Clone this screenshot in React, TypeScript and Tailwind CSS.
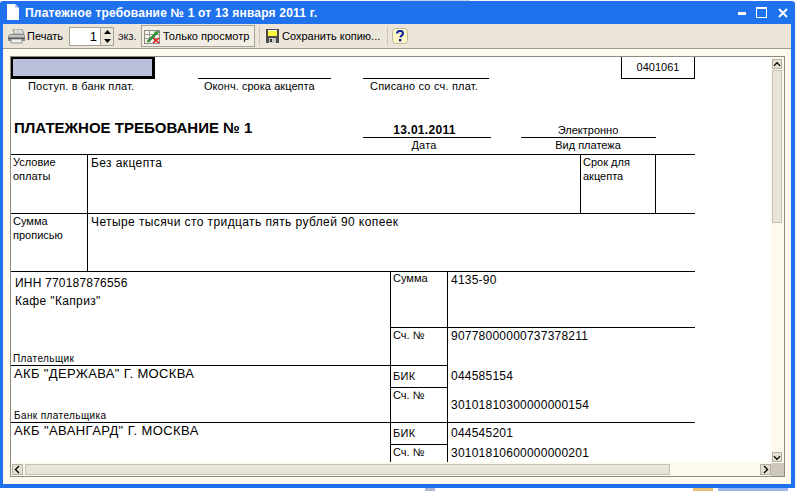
const arial = "font-['Liberation_Sans',Arial,sans-serif]";

function DocIcon() {
  return (
    <svg width="14" height="17" viewBox="0 0 14 17" className="ml-[6px] shrink-0">
      <path d="M1 0h8l4 4v12H1z" fill="#ffffff" />
      <path d="M9 0v4h4" fill="#b9cdf0" />
    </svg>
  );
}

function PrinterIcon() {
  return (
    <svg width="17" height="15" viewBox="0 0 17 15" className="shrink-0">
      <path d="M5 0h9l2 5H6z" fill="#dcdcdc" stroke="#7d7d7d" strokeWidth="0.7" />
      <path d="M2 5h14l1 2v5H0V7z" fill="#8a8a8a" />
      <rect x="1" y="6" width="15" height="2" fill="#c4c4c4" />
      <rect x="3" y="10" width="11" height="4" fill="#eeeeee" stroke="#6a6a6a" strokeWidth="0.6" />
      <rect x="0" y="9" width="17" height="1" fill="#5f5f5f" />
    </svg>
  );
}

function ViewOnlyIcon() {
  return (
    <svg width="17" height="15" viewBox="0 0 17 15" className="shrink-0">
      <rect x="0.5" y="1.5" width="15" height="13" fill="#f5f5ee" stroke="#8a8a80" />
      <path d="M0 5.5h16M0 9.5h16M5.5 1v14M10.5 1v14" stroke="#9a9a90" strokeWidth="1" />
      <path d="M4 11 13 2l2 1-9 9-3 1z" fill="#2f9e3a" stroke="#1c6e25" strokeWidth="0.6" />
      <path d="M9 9l6 5M15 9l-6 5" stroke="#e01818" strokeWidth="1.6" />
    </svg>
  );
}

function FloppyIcon() {
  return (
    <svg width="13" height="14" viewBox="0 0 13 14" className="shrink-0">
      <rect width="13" height="14" fill="#4b4b4b" />
      <rect x="2" y="1" width="9" height="6" fill="#fff23a" />
      <rect x="2" y="1" width="9" height="1" fill="#ffffff" />
      <rect x="3" y="9" width="7" height="5" fill="#c9c9c9" />
      <rect x="4" y="10" width="2" height="3" fill="#333333" />
    </svg>
  );
}

function HelpIcon() {
  return (
    <svg width="16" height="16" viewBox="0 0 16 16" className="shrink-0">
      <rect x="0.5" y="0.5" width="15" height="15" rx="3" fill="#fdf8c4" stroke="#b9b6a4" />
      <path d="M5 5.5C5 3.6 6.3 3 8 3s3 .8 3 2.4c0 2-2.6 2-2.6 4.2" fill="none" stroke="#0c1c9c" strokeWidth="2" />
      <rect x="7" y="11" width="2.4" height="2.4" fill="#0c1c9c" />
    </svg>
  );
}

function Chevron({ d }: { d: string }) {
  return (
    <svg width="9" height="9" viewBox="0 0 9 9">
      <path d={d} fill="none" stroke="#000000" strokeWidth="1.4" />
    </svg>
  );
}

function ScrollButton({ d, className }: { d: string; className: string }) {
  return (
    <div className={`flex items-center justify-center bg-[#e4dfd2] border border-[#f8f6ee] outline outline-[#b5b0a2] -outline-offset-1 ${className}`}>
      <Chevron d={d} />
    </div>
  );
}

function Cell({ className = "", children }: { className?: string; children?: React.ReactNode }) {
  return <div className={`border-black ${className}`}>{children}</div>;
}

export default function App() {
  return (
    <div className={`w-[796px] h-[491px] overflow-hidden bg-white text-black ${arial}`}>
      {/* desktop behind the window, top edge */}
      <div className="h-px flex">
        <div className="w-[400px]" />
        <div className="w-[70px] bg-[#c9cfe6]" />
      </div>
      <div className="flex">
        <div className="w-[795px] h-[487px] flex flex-col bg-[#1f72ec] px-[3px] pb-[4px] rounded-t-[3px] pr-[4px]">
          {/* title bar */}
          <div className="h-[23px] shrink-0 flex items-center -ml-[3px] -mr-[4px]">
            <DocIcon />
            <span className="ml-[5px] text-[12px] font-bold text-white tracking-[0.2px] leading-none">
              Платежное требование № 1 от 13 января 2011 г.
            </span>
            <div className="ml-auto flex items-center">
              <div className="w-[8px] h-[3px] bg-white self-end mb-[3px]" />
              <div className="ml-[10px] w-[11px] h-[11px] border border-t-2 border-white" />
              <svg width="10" height="10" viewBox="0 0 10 10" className="ml-[11px] mr-[7px]">
                <path d="M1 1l8 8M9 1l-8 8" stroke="#ffffff" strokeWidth="2" />
              </svg>
            </div>
          </div>

          {/* toolbar */}
          <div className="h-[25px] shrink-0 flex items-center bg-[#ebe5da] border-b border-[#a19d92] text-[11px] pl-[5px]">
            <PrinterIcon />
            <span className="ml-[2px] w-[42px]">Печать</span>
            <div className="flex h-[19px] w-[45px] border border-[#a5a193] bg-white">
              <div className="w-[30px] text-right pr-[3px] text-[13px] leading-[17px]">1</div>
              <div className="flex-1 flex flex-col items-center justify-between py-[2px] bg-[#ece8dc] border-l border-[#a5a193]">
                <svg width="7" height="4" viewBox="0 0 7 4"><path d="M3.5 0 7 4H0z" fill="#000000" /></svg>
                <svg width="7" height="4" viewBox="0 0 7 4"><path d="M3.5 4 7 0H0z" fill="#000000" /></svg>
              </div>
            </div>
            <span className="ml-[4px] w-[23px] text-[#222222]">экз.</span>
            <div className="h-[22px] w-[114px] flex items-center border border-[#a5a193] bg-[#f2eee6] pl-[2px]">
              <ViewOnlyIcon />
              <span className="ml-[2px] whitespace-nowrap">Только просмотр</span>
            </div>
            <div className="ml-[4px] w-px h-[18px] bg-[#c9c4b7]" />
            <div className="ml-[6px]"><FloppyIcon /></div>
            <span className="ml-[3px] whitespace-nowrap w-[105px]">Сохранить копию...</span>
            <div className="w-px h-[18px] bg-[#c9c4b7]" />
            <div className="ml-[4px]"><HelpIcon /></div>
          </div>

          {/* client area */}
          <div className="flex-1 min-h-0 bg-[#fdf9ee] pt-[7px] px-[7px] pb-[7px] pr-[6px]">
            <div className="h-[421px] border border-[#8f8b80] flex flex-col bg-[#fdf9ee]">
              <div className="h-[406px] flex">
                {/* document */}
                <div className="w-[760px] h-[405px] overflow-hidden bg-white">
                  <div className="flex h-[22px]">
                    <div className="w-[144px] h-[22px] border-black border-t-2 border-l-2 border-r-[3px] border-b-[3px] bg-[#bcbfdc]" />
                    <div className="ml-[43px] w-[133px] border-b border-black" />
                    <div className="ml-[32px] w-[126px] border-b border-black" />
                    <div className="ml-[132px] w-[74px] border-x border-b border-black flex items-center justify-center text-[11px]">
                      0401061
                    </div>
                  </div>
                  <div className="flex h-[14px] text-[11px] leading-[14px] tracking-[0.2px]">
                    <div className="w-[187px] pl-[17px]">Поступ. в банк плат.</div>
                    <div className="w-[165px] pl-[6px] tracking-[0.05px]">Оконч. срока акцепта</div>
                    <div className="pl-[7px]">Списано со сч. плат.</div>
                  </div>

                  <div className="flex h-[61px]">
                    <div className="w-[352px] pl-[3px] pt-[27px] text-[15px] leading-[16px] font-bold">
                      ПЛАТЕЖНОЕ ТРЕБОВАНИЕ № 1
                    </div>
                    <div className="w-[128px] flex flex-col text-center">
                      <div className="h-[45px] border-b border-black flex items-end justify-center pr-[5px] text-[12px] font-bold leading-[14px] tracking-[0.3px]">13.01.2011</div>
                      <div className="pr-[6px] text-[11px] leading-[15px] tracking-[0.2px]">Дата</div>
                    </div>
                    <div className="ml-[30px] w-[135px] flex flex-col text-center">
                      <div className="h-[45px] border-b border-black flex items-end justify-center text-[11px] leading-[14px] pr-px">Электронно</div>
                      <div className="text-[11px] leading-[15px] pr-px">Вид платежа</div>
                    </div>
                  </div>

                  {/* условие / сумма прописью */}
                  <div className="w-[684px]">
                    <div className="flex h-[59px] border-t border-black">
                      <Cell className="w-[77px] border-r pl-[2px] text-[11px] leading-[14px]">Условие<br />оплаты</Cell>
                      <Cell className="w-[493px] border-r pl-[3px] text-[12px] leading-[15px] pt-px tracking-[0.4px]">Без акцепта</Cell>
                      <Cell className="w-[75px] border-r pl-[2px] text-[11px] leading-[14px]">Срок для<br />акцепта</Cell>
                    </div>
                    <div className="flex h-[58px] border-t border-black">
                      <Cell className="w-[77px] border-r pl-[2px] text-[11px] leading-[14px]">Сумма<br />прописью</Cell>
                      <Cell className="flex-1 pl-[3px] text-[12px] leading-[15px] pt-px tracking-[0.4px]">Четыре тысячи сто тридцать пять рублей 90 копеек</Cell>
                    </div>
                  </div>

                  {/* реквизиты */}
                  <div className="flex w-[684px] h-[191px] text-[11px]">
                    <div className="w-[380px] border-r border-black flex flex-col">
                      <div className="h-[94px] border-t border-black flex flex-col">
                        <div className="pl-[4px] pt-[4px] text-[12px] leading-[15px] tracking-[0.2px]">ИНН 770187876556</div>
                        <div className="pl-[4px] pt-[3px] text-[12px] leading-[15px] tracking-[0.35px]">Кафе "Каприз"</div>
                        <div className="mt-auto pl-[2px] text-[10px] leading-[12px] tracking-[0.4px]">Плательщик</div>
                      </div>
                      <div className="h-[57px] border-t border-black flex flex-col">
                        <div className="pl-[3px] text-[13px] leading-[16px] tracking-[0.35px]">АКБ "ДЕРЖАВА" Г. МОСКВА</div>
                        <div className="mt-auto pl-[3px] text-[10px] leading-[12px] tracking-[0.4px]">Банк плательщика</div>
                      </div>
                      <div className="flex-1 border-t border-black pl-[3px] text-[13px] leading-[16px] tracking-[0.4px]">АКБ "АВАНГАРД" Г. МОСКВА</div>
                    </div>
                    <div className="w-[57px] border-r border-black flex flex-col leading-[12px]">
                      <div className="h-[56px] border-t border-black pl-[2px]">Сумма</div>
                      <div className="h-[38px] border-t border-black pl-[2px] pt-px">Сч. №</div>
                      <div className="h-[22px] border-t border-black pl-[2px] pt-[4px] tracking-[0.3px]">БИК</div>
                      <div className="h-[35px] border-t border-black pl-[2px] pt-px">Сч. №</div>
                      <div className="h-[22px] border-t border-black pl-[2px] pt-[4px] tracking-[0.3px]">БИК</div>
                      <div className="flex-1 border-t border-black pl-[2px] pt-px">Сч. №</div>
                    </div>
                    <div className="flex-1 flex flex-col text-[12px] leading-[15px] tracking-[0.23px]">
                      <div className="h-[56px] border-t border-black pl-[3px] pt-px">4135-90</div>
                      <div className="h-[95px] border-t border-black pl-[3px] pt-px flex flex-col">
                        <div>90778000000737378211</div>
                        <div className="mt-[25px]">044585154</div>
                        <div className="mt-[14px]">30101810300000000154</div>
                      </div>
                      <div className="flex-1 border-t border-black pl-[3px] pt-[3px]">
                        <div>044545201</div>
                        <div className="mt-[5px]">30101810600000000201</div>
                      </div>
                    </div>
                  </div>
                </div>

                {/* vertical scrollbar */}
                <div className="flex-1 flex flex-col items-center pt-[2px] pb-[1px] pl-px pr-[2px]">
                  <ScrollButton d="M1 6l3.5-3.5L8 6" className="w-[10px] h-[10px]" />
                  <div className="mt-px w-[10px] h-[153px] bg-[#e9e4d8] border border-[#c6c1b3]" />
                  <ScrollButton d="M1 3l3.5 3.5L8 3" className="mt-auto w-[10px] h-[10px]" />
                </div>
              </div>

              {/* horizontal scrollbar */}
              <div className="h-[13px] flex">
                <div className="w-[760px] flex items-center pl-px">
                  <ScrollButton d="M6 1 2.5 4.5 6 8" className="w-[11px] h-[11px]" />
                  <div className="ml-[2px] w-[645px] h-[11px] bg-[#e9e4d8] border border-[#c6c1b3]" />
                  <ScrollButton d="M3 1l3.5 3.5L3 8" className="ml-auto w-[11px] h-[11px]" />
                </div>
                <div className="flex-1 bg-[#cdc8bb]" />
              </div>
            </div>
          </div>
        </div>
        <div className="w-px bg-[#f4f4f4]" />
      </div>
      {/* desktop behind the window, bottom edge */}
      <div className="h-[3px] flex">
        <div className="ml-[425px] w-[10px] bg-[#aeb6d0]" />
        <div className="ml-[258px] w-[20px] bg-[#e8c070]" />
        <div className="ml-[5px] w-[70px] bg-[#9db6ee]" />
      </div>
    </div>
  );
}
